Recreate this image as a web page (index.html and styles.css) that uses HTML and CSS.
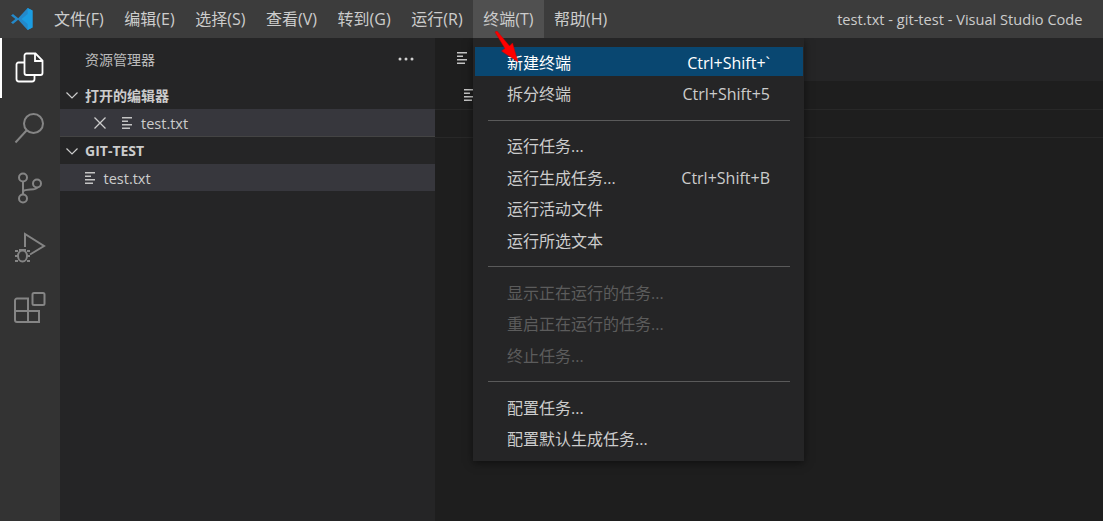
FILE: index.html
```html
<!DOCTYPE html>
<html lang="zh-CN">
<head>
<meta charset="utf-8">
<title>test.txt - git-test - Visual Studio Code</title>
<link rel="stylesheet" href="styles.css">
</head>
<body>
<div class="app">
  <header class="titlebar">
    <svg class="logo" width="24" height="24" viewBox="0 0 24 24"><path fill="#2489ca" d="M1 8.600 3 7l5.200 4.300L17.600 1l4.900 2.400v17.200L17.600 23l-9.400-10.300L3 17l-2-1.600L5.400 12z"/><path fill="#1b9de2" fill-rule="evenodd" d="M17.600 1l4.900 2.400v17.200L17.600 23zM17.600 7l-6 5 6 5z"/></svg>
    <nav class="menubar">
      <span class="mb">文件(F)</span><span class="mb">编辑(E)</span><span class="mb">选择(S)</span><span class="mb">查看(V)</span><span class="mb">转到(G)</span><span class="mb">运行(R)</span><span class="mb mb-open">终端(T)</span><span class="mb">帮助(H)</span>
    </nav>
    <div class="wintitle">test.txt - git-test - Visual Studio Code</div>
  </header>
  <div class="main">
    <aside class="activity">
      <div class="act act-on">
        <svg width="32" height="32" viewBox="0 0 32 32" fill="none" stroke="#fff" stroke-width="1.800"><path d="M10.500 10.500H4.500a2 2 0 0 0-2 2v14.500a2.500 2.500 0 0 0 2.500 2.500h13a2.500 2.500 0 0 0 2.500-2.500v-3.500"/><path d="M10.500 3.500a2 2 0 0 1 2-2h9l7 7v12.500a2 2 0 0 1-2 2h-14a2 2 0 0 1-2-2z"/><path d="M21 1.500v7.500h7.500"/></svg>
      </div>
      <div class="act">
        <svg width="32" height="32" viewBox="0 0 32 32" fill="none" stroke="#858585" stroke-width="2"><circle cx="19.500" cy="11.500" r="9.500"/><path d="M12.500 18.500 1.500 30.500"/></svg>
      </div>
      <div class="act">
        <svg width="32" height="32" viewBox="0 0 32 32" fill="none" stroke="#858585" stroke-width="2"><circle cx="9" cy="5.500" r="4"/><circle cx="9" cy="26.500" r="4"/><circle cx="23" cy="11.500" r="4"/><path d="M9 9.500v13M9 20c0-4 14-1 14-4.500"/></svg>
      </div>
      <div class="act">
        <svg width="32" height="32" viewBox="0 0 32 32" fill="none" stroke="#858585" stroke-width="2"><path d="M11 15V2l19 12-14 8.500"/><ellipse cx="8.500" cy="24" rx="4.500" ry="5.500"/><path d="M1 19h3M1 24h3M1 29h3M13 19h3M13 24h3M13 29h3M5 18h7"/></svg>
      </div>
      <div class="act">
        <svg width="32" height="32" viewBox="0 0 32 32" fill="none" stroke="#858585" stroke-width="2"><path d="M3 6.500h11v23.500H3a2 2 0 0 1-2-2V8.500a2 2 0 0 1 2-2z"/><path d="M1 19h24v11H14"/><rect x="18.500" y="1" width="12" height="12" rx="1.500"/></svg>
      </div>
    </aside>
    <section class="sidebar">
      <div class="side-title"><span>资源管理器</span><svg class="dots" width="16" height="4" viewBox="0 0 16 4" fill="#d0d0d0"><circle cx="2" cy="2" r="1.500"/><circle cx="8" cy="2" r="1.500"/><circle cx="14" cy="2" r="1.500"/></svg></div>
      <div class="sec-head sec-head-a"><svg class="chev" width="16" height="16" viewBox="0 0 16 16" fill="none" stroke="#ccc" stroke-width="1.200"><path d="M2.500 5.500 8 11l5.500-5.500"/></svg>打开的编辑器</div>
      <div class="row row-open">
        <svg class="close" width="14" height="14" viewBox="0 0 14 14" fill="none" stroke="#ccc" stroke-width="1.300"><path d="M1.500 1.500l11 11M12.500 1.500l-11 11"/></svg>
        <svg class="fi" width="12" height="12" viewBox="0 0 12 12" fill="#c5c5c5"><path d="M1 0h10v1.500H1zM1 3.500h6V5H1zM1 7h10v1.500H1zM1 10.500h8V12H1z"/></svg>
        <span class="fname">test.txt</span>
      </div>
      <div class="rule"></div>
      <div class="sec-head"><svg class="chev" width="16" height="16" viewBox="0 0 16 16" fill="none" stroke="#ccc" stroke-width="1.200"><path d="M2.500 5.500 8 11l5.500-5.500"/></svg>GIT-TEST</div>
      <div class="row row-tree">
        <svg class="fi" width="12" height="12" viewBox="0 0 12 12" fill="#c5c5c5"><path d="M1 0h10v1.500H1zM1 3.500h6V5H1zM1 7h10v1.500H1zM1 10.500h8V12H1z"/></svg>
        <span class="fname">test.txt</span>
      </div>
    </section>
    <section class="editor">
      <div class="tabs"><div class="tab"><svg width="12" height="12" viewBox="0 0 12 12" fill="#c5c5c5"><path d="M1 0h10v1.500H1zM1 3.500h6V5H1zM1 7h10v1.500H1zM1 10.500h8V12H1z"/></svg></div></div>
      <div class="crumb"><svg width="12" height="12" viewBox="0 0 12 12" fill="#c5c5c5"><path d="M1 0h10v1.500H1zM1 3.500h6V5H1zM1 7h10v1.500H1zM1 10.500h8V12H1z"/></svg></div>
      <div class="line"></div>
    </section>
  </div>
  <div class="menu">
    <div class="mi mi-sel"><span>新建终端</span><span class="key">Ctrl+Shift+`</span></div>
    <div class="mi"><span>拆分终端</span><span class="key">Ctrl+Shift+5</span></div>
    <div class="sep"></div>
    <div class="mi"><span>运行任务...</span></div>
    <div class="mi"><span>运行生成任务...</span><span class="key">Ctrl+Shift+B</span></div>
    <div class="mi"><span>运行活动文件</span></div>
    <div class="mi"><span>运行所选文本</span></div>
    <div class="sep"></div>
    <div class="mi mi-off"><span>显示正在运行的任务...</span></div>
    <div class="mi mi-off"><span>重启正在运行的任务...</span></div>
    <div class="mi mi-off"><span>终止任务...</span></div>
    <div class="sep"></div>
    <div class="mi"><span>配置任务...</span></div>
    <div class="mi"><span>配置默认生成任务...</span></div>
  </div>
  <svg class="arrow" width="26" height="32" viewBox="0 0 26 32"><path fill="#f00" stroke="#c00" stroke-width=".5" d="M1 1 3 0 15.500 15l3-3 5.500 19-16.500-11 3.500-2.500z"/></svg>
</div>
</body>
</html>
```
FILE: styles.css
```css
* { box-sizing: border-box; }
html, body { margin: 0; height: 100%; overflow: hidden; background: #1e1e1e; }
body { font-family: "Open Sans", "Noto Sans CJK SC", sans-serif; font-size: 15px; color: #ccc; }
.app { position: relative; width: 1103px; height: 521px; display: flex; flex-direction: column; }

.titlebar { position: relative; z-index: 2; height: 38px; flex: none; background: #3c3c3c; display: flex; align-items: center; }
.logo { margin-left: 10px; margin-right: 6px; flex: none; }
.menubar { display: flex; height: 100%; margin-left: 3.700px; }
.mb { padding: 0 10.300px; font-size: 16px; line-height: 38px; white-space: nowrap; }
.mb-open { background: #505050; }
.wintitle { margin-left: auto; margin-right: 20.500px; font-size: 14.600px; white-space: nowrap; }

.main { flex: 1; display: flex; min-height: 0; }
.activity { width: 60px; flex: none; background: #333; display: flex; flex-direction: column; }
.act { height: 60px; display: flex; align-items: center; justify-content: center; }
.act-on { box-shadow: inset 2px 0 0 #fff; }

.sidebar { width: 375px; flex: none; background: #252526; }
.side-title { height: 44px; padding: 0 21px 2px 25px; display: flex; align-items: center; justify-content: space-between; font-size: 14px; color: #bbb; }
.sec-head { height: 27px; display: flex; align-items: center; font-size: 14px; font-weight: 700; color: #ccc; padding-left: 4px; }
.sec-head-a { height: 28px; padding-bottom: 1px; margin-top: -1px; }
.chev { margin-right: 5px; }
.row { height: 27px; background: #37373d; display: flex; align-items: center; font-size: 14.500px; }
.fname { padding-top: 2px; }
.row-open { padding-left: 33px; }
.close { margin-right: 14px; }
.fi { margin-right: 8px; }
.row-tree { padding-left: 23.500px; }
.rule { height: 1px; background: #444; }

.editor { flex: 1; min-width: 0; background: #1e1e1e; display: flex; flex-direction: column; }
.tabs { height: 43px; flex: none; background: #252526; display: flex; }
.tab { width: 120px; background: #1e1e1e; display: flex; align-items: center; padding: 0 0 3px 21px; }
.crumb { height: 29px; flex: none; padding: 0 0 0 28px; display: flex; align-items: center; border-bottom: 1px solid #282828; }
.line { height: 28px; flex: none; border-bottom: 1px solid #282828; }

.menu { position: absolute; z-index: 1; left: 473px; top: 38px; width: 331px; height: 423px; background: #252526; padding: 9px 1px 0 2px; box-shadow: 0 2px 8px rgba(0, 0, 0, .5); }
.mi { height: 29px; margin-bottom: 2.500px; padding: 0 33px 0 32px; display: flex; justify-content: space-between; align-items: center; font-size: 16px; color: #ccc; white-space: nowrap; }
.key { padding-top: 2px; }
.mi-sel { background: #094771; color: #fff; }
.mi-off { color: #5c5c5c; }
.sep { height: 1px; background: #5a5a5a; margin: 12px 13px 10px; }

.arrow { position: absolute; z-index: 3; left: 494px; top: 31px; }
```
